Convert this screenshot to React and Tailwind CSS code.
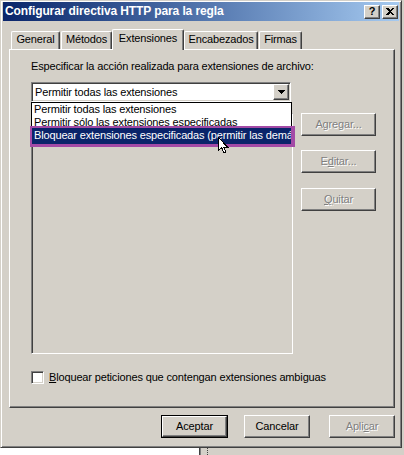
import React from 'react';

const raised =
  'border border-t-white border-l-white border-r-[#404040] border-b-[#404040] shadow-[inset_-1px_-1px_0_#808080]';
const sunken =
  'border border-t-[#808080] border-l-[#808080] border-r-white border-b-white shadow-[inset_1px_1px_0_#404040,inset_-1px_-1px_0_#d4d0c8]';
const disabledText = 'text-[#808080] [text-shadow:1px_1px_0_#fff]';

const U = ({ children }) => <span className="underline underline-offset-[1px]">{children}</span>;

function Button({ children, disabled, primary, className = '' }) {
  const inner = (
    <div className={`flex h-full w-full items-center justify-center bg-[#d4d0c8] ${raised} ${disabled ? disabledText : 'text-black'}`}>
      {children}
    </div>
  );
  return <div className={`h-[23px] ${primary ? 'border border-black' : ''} ${className}`}>{inner}</div>;
}

function Tab({ label, className, active }) {
  return (
    <div
      className={`flex justify-center rounded-t-[2px] border-t border-l border-r border-t-white border-l-white border-r-[#404040] bg-[#d4d0c8] shadow-[inset_-1px_0_0_#808080] ${
        active ? 'relative z-10 -mb-px h-[21px] pt-[2px]' : 'h-[18px] pt-[1px]'
      } ${className}`}
    >
      {label}
    </div>
  );
}

function TitleBar() {
  return (
    <div className="flex h-[19px] items-center bg-linear-to-r from-[#0a246a] to-[#a6caf0] pl-[2px] pr-[1px]">
      <span className="flex-1 text-[12px] font-bold tracking-[-0.1px] text-white">
        Configurar directiva HTTP para la regla
      </span>
      <div className={`flex h-[14px] w-[16px] items-center justify-center bg-[#d4d0c8] ${raised}`}>
        <span className="text-[11px] font-bold leading-none text-black">?</span>
      </div>
      <div className={`ml-[2px] flex h-[14px] w-[16px] items-center justify-center bg-[#d4d0c8] ${raised}`}>
        <svg width="8" height="7" viewBox="0 0 8 7" shapeRendering="crispEdges">
          <path d="M0 0h2l2 2 2-2h2L5 3.5 8 7H6L4 5 2 7H0l3-3.5z" fill="#000" />
        </svg>
      </div>
    </div>
  );
}

function Combo() {
  return (
    <div className="relative mt-[9px] w-[260px]">
      <div className={`flex h-[20px] w-[260px] items-center bg-white ${sunken} p-px`}>
        <span className="flex-1 pl-[2px]">Permitir todas las extensiones</span>
        <div className={`flex h-[16px] w-[16px] items-center justify-center bg-[#d4d0c8] ${raised}`}>
          <svg width="7" height="4" viewBox="0 0 7 4" shapeRendering="crispEdges">
            <path d="M0 0h7L3.5 4z" fill="#000" />
          </svg>
        </div>
      </div>

      {/* open dropdown list */}
      <div className="absolute left-0 top-full z-20 h-[44px] w-[261px] overflow-hidden border border-black bg-white pl-[2px] whitespace-nowrap">
        <div>Permitir todas las extensiones</div>
        <div>Permitir sólo las extensiones especificadas</div>
      </div>

      {/* highlighted item with purple marker */}
      <div className="absolute left-[-1px] top-[44px] z-30 h-[21px] w-[265px] overflow-hidden border-t-2 border-l-2 border-b-[3px] border-r-4 border-[#a34aa6] bg-[#0a246a] pl-[2px] pt-px whitespace-nowrap text-white">
        Bloquear extensiones especificadas (permitir las demá
      </div>

      {/* mouse pointer */}
      <svg className="absolute left-[187px] top-[55px] z-40" width="11" height="17" viewBox="0 0 11 17" shapeRendering="crispEdges">
        <path d="M0.5 0.5v13l3-3 2.5 5.5 2-1-2.5-5h4z" fill="#fff" stroke="#000" strokeWidth="1" />
      </svg>
    </div>
  );
}

function Panel() {
  return (
    <div className="ml-[6px] h-[359px] w-[386px] border border-t-white border-l-white border-r-[#404040] border-b-[#404040] bg-[#d4d0c8] pl-[21px] pt-[10px] shadow-[inset_-1px_-1px_0_#808080]">
      <div>Especificar la acción realizada para extensiones de archivo:</div>
      <Combo />
      <div className="mt-[11px] flex">
        <div className={`h-[241px] w-[262px] bg-[#d4d0c8] ${sunken}`} />
        <div className="ml-[8px] flex w-[75px] flex-col">
          <Button disabled>
            Agre<U>g</U>ar...
          </Button>
          <Button disabled className="mt-[14px]">
            E<U>d</U>itar...
          </Button>
          <Button disabled className="mt-[15px]">
            <U>Q</U>uitar
          </Button>
        </div>
      </div>
      <div className="mt-[17px] flex items-center">
        <div className={`h-[13px] w-[13px] bg-white ${sunken}`} />
        <span className="ml-[5px]">
          <U>B</U>loquear peticiones que contengan extensiones ambiguas
        </span>
      </div>
    </div>
  );
}

function Dialog() {
  return (
    <div className="flex h-[448px] w-[402px] flex-col border border-t-[#d4d0c8] border-l-[#d4d0c8] border-r-[#404040] border-b-[#404040] bg-[#d4d0c8] px-[2px] pt-px shadow-[inset_1px_1px_0_#fff,inset_-1px_-1px_0_#808080]">
      <TitleBar />
      <div className="ml-[8px] mt-[8px] flex h-[20px] items-end">
        <Tab label="General" className="w-[49px]" />
        <Tab label="Métodos" className="ml-px w-[51px]" />
        <Tab label="Extensiones" className="w-[72px]" active />
        <Tab label="Encabezados" className="w-[74px]" />
        <Tab label="Firmas" className="ml-px w-[43px]" />
      </div>
      <Panel />
      <div className="mt-[7px] flex">
        <Button primary className="ml-[158px] w-[67px]">
          Aceptar
        </Button>
        <Button className="ml-[16px] w-[66px]">Cancelar</Button>
        <Button disabled className="ml-[19px] w-[66px]">
          Apli<U>c</U>ar
        </Button>
      </div>
    </div>
  );
}

export default function App() {
  return (
    <div className="h-[455px] w-[404px] overflow-hidden bg-[#d4d0c8] font-['Liberation_Sans',Arial,sans-serif] text-[11px] leading-[13px] tracking-[-0.15px] text-black">
      <Dialog />
      <div className="flex h-[7px]">
        <div className="w-[199px] bg-white" />
        <div className="w-px bg-[#404040]" />
        <div className="w-px bg-[#808080]" />
        <div className="ml-[6px] w-px border-l border-dotted border-[#404040]" />
      </div>
    </div>
  );
}
